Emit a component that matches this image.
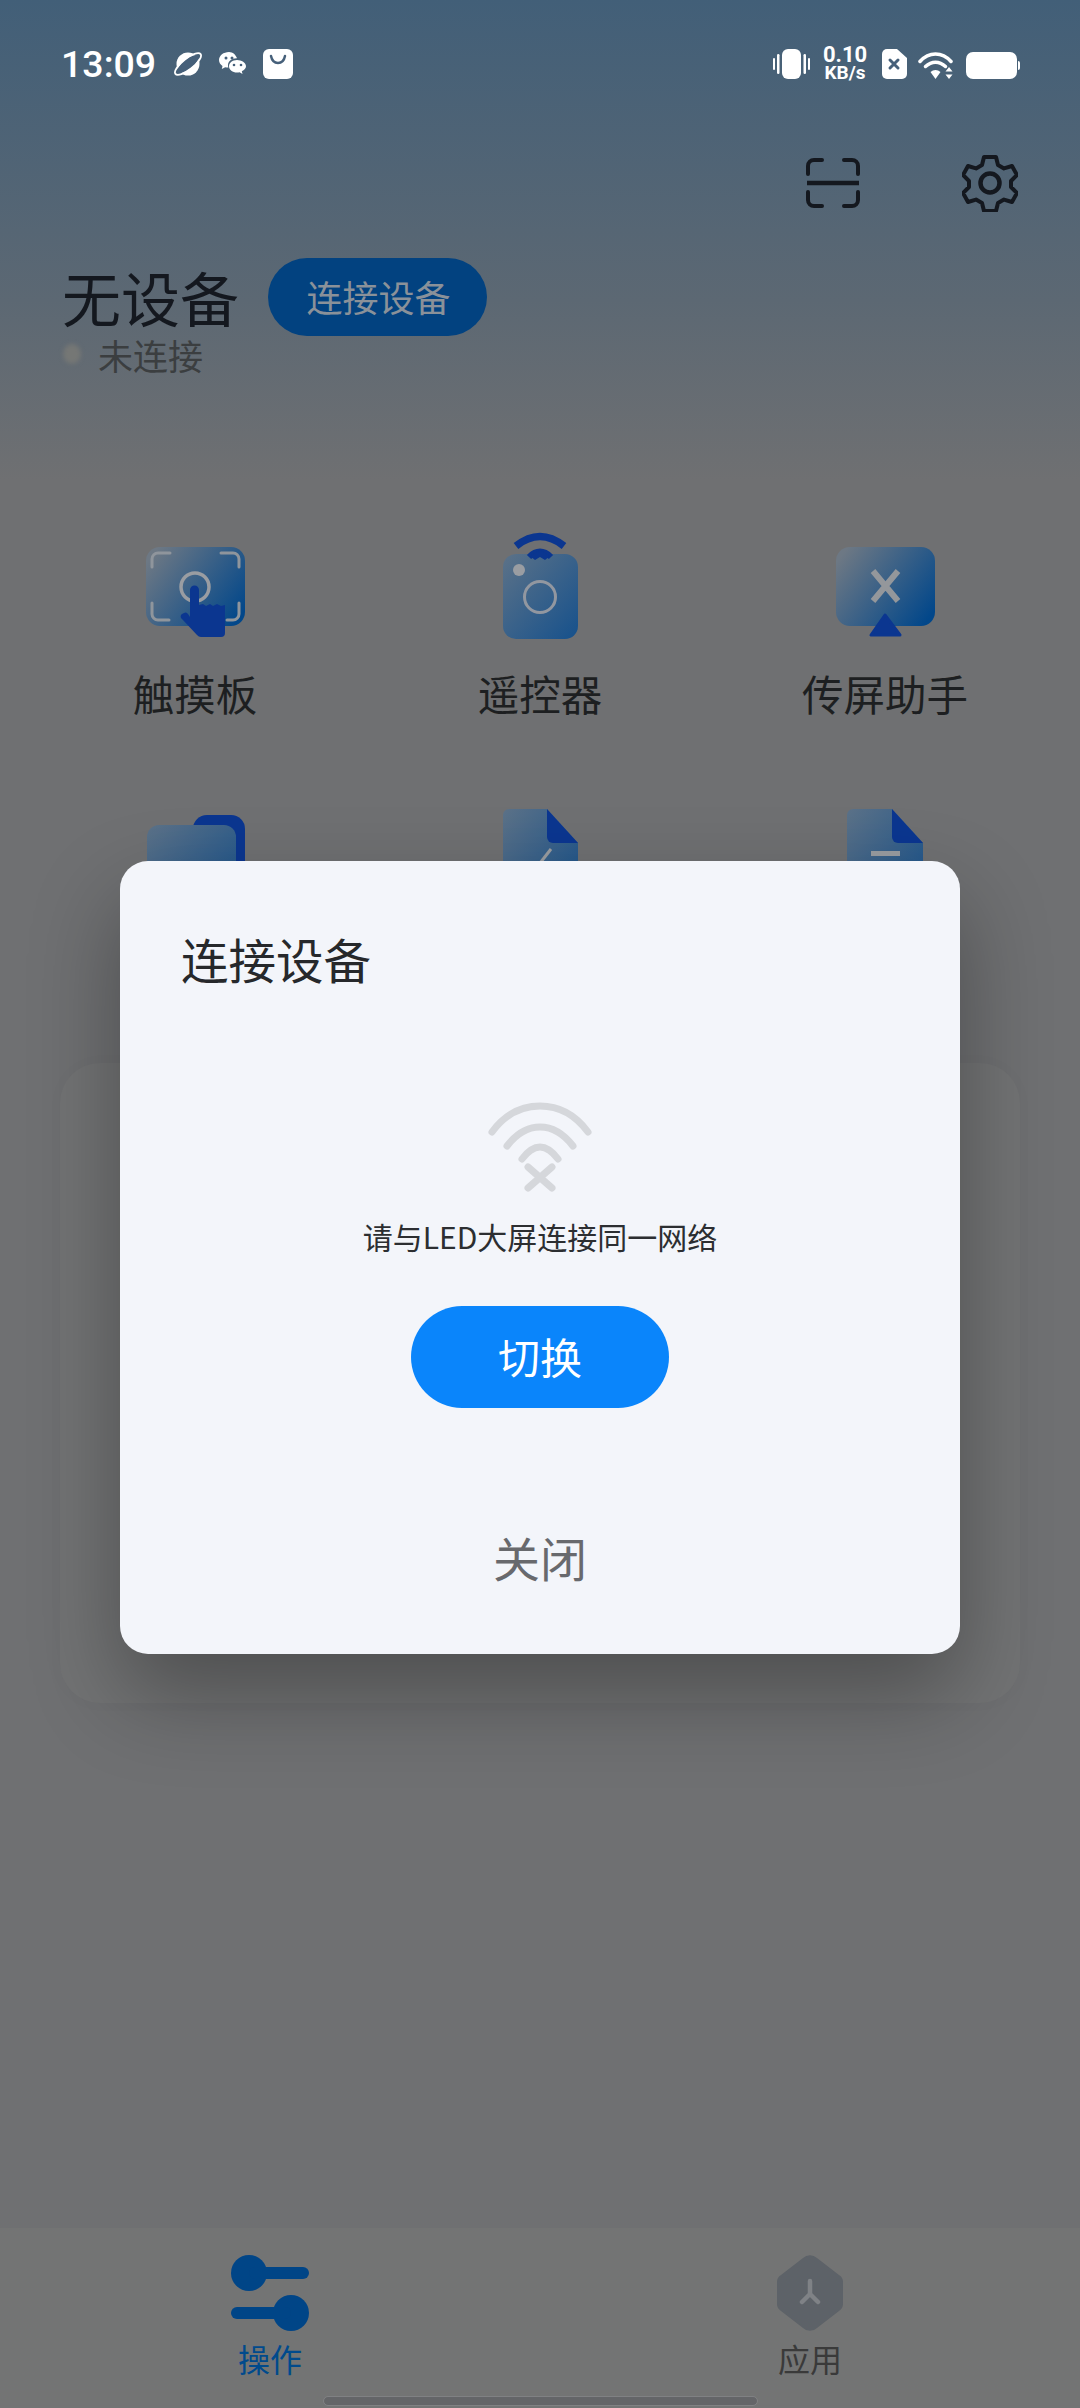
<script>
    const row1 = ["触摸板", "遥控器", "传屏助手"]
</script>

<div class="page">
    <div class="status">
        <span class="time">13:09</span>
        <svg class="s-orbit" width="30" height="26" viewBox="0 0 30 26">
            <circle cx="15" cy="13" r="11.5" fill="#fff"/>
            <ellipse cx="15" cy="13" rx="13" ry="5" transform="rotate(-38 15 13)" fill="#46607a"/>
            <ellipse cx="15" cy="13" rx="16" ry="5.5" transform="rotate(-38 15 13)" fill="none" stroke="#fff" stroke-width="1.8"/>
            <ellipse cx="15" cy="13" rx="10" ry="2.6" transform="rotate(-38 15 13)" fill="#46607a"/>
        </svg>
        <svg class="s-wechat" width="28" height="24" viewBox="0 0 28 24">
            <path d="M10 0C4.500 0 0 3.600 0 8c0 2.500 1.400 4.600 3.500 6L2.800 17l3.400-1.800c1 .3 2.100.4 3.200.4-.3-.8-.4-1.500-.4-2.300 0-4 3.800-7 8.500-7h.5C16.900 2.900 13.800 0 10 0z" fill="#fff"/>
            <path d="M18 8c-4.400 0-8 2.800-8 6.300s3.600 6.300 8 6.300c.9 0 1.800-.1 2.600-.4l2.900 1.700-.7-2.600c2.500-1.100 4.200-3 4.200-5 0-3.500-4.600-6.300-9-6.300z" fill="#fff"/>
            <circle cx="7" cy="6" r="1.500" fill="#46607a"/>
            <circle cx="13" cy="6" r="1.500" fill="#46607a"/>
            <circle cx="15" cy="13" r="1.300" fill="#46607a"/>
            <circle cx="22" cy="13" r="1.300" fill="#46607a"/>
        </svg>
        <svg class="s-bag" width="30" height="30" viewBox="0 0 30 30">
            <rect width="30" height="30" rx="6" fill="#fff"/>
            <path d="M8 7c1 5 3 7 7 7s6-2 7-7" fill="none" stroke="#46607a" stroke-width="2.500" stroke-linecap="round"/>
        </svg>
        <div class="status-right">
            <svg width="37" height="30" viewBox="0 0 37 30">
                <rect x="9" width="19" height="30" rx="6" fill="#fff"/>
                <rect y="9" width="2" height="12" rx="1" fill="#fff"/>
                <rect x="4" y="5" width="2.500" height="20" rx="1.200" fill="#fff"/>
                <rect x="30.500" y="5" width="2.500" height="20" rx="1.200" fill="#fff"/>
                <rect x="35" y="9" width="2" height="12" rx="1" fill="#fff"/>
            </svg>
            <div class="speed"><span>0.10</span><span class="unit">KB/s</span></div>
            <svg width="25" height="30" viewBox="0 0 25 30">
                <path d="M5 0h10l10 9v16a5 5 0 0 1-5 5H5a5 5 0 0 1-5-5V5a5 5 0 0 1 5-5z" fill="#fff"/>
                <path d="M8 11l8 8M16 11l-8 8" stroke="#46607a" stroke-width="3" stroke-linecap="round"/>
            </svg>
            <svg width="37" height="28" viewBox="0 0 37 28">
                <path d="M2 9.500C6 5 12 2 17.500 2S29 5 33 9.500" fill="none" stroke="#fff" stroke-width="3.500" stroke-linecap="round"/>
                <path d="M7.500 14.500c3-2.800 6.500-4.300 10-4.300s7 1.500 10 4.300" fill="none" stroke="#fff" stroke-width="3.500" stroke-linecap="round"/>
                <path d="M12.500 20c1.500-1.300 3.200-2 5-2s3.500.7 5 2L17.500 27z" fill="#fff"/>
                <path d="M31 15l3.500 4.500h-7zM31 27l-3.500-4.500h7z" fill="#fff"/>
            </svg>
            <svg width="54" height="27" viewBox="0 0 54 27">
                <rect width="51" height="27" rx="7" fill="#fff"/>
                <path d="M52 9a2 2 0 0 1 2 2v5a2 2 0 0 1-2 2z" fill="#fff"/>
            </svg>
        </div>
    </div>

    <div class="actions">
        <svg width="54" height="50" viewBox="0 0 54 50" fill="none" stroke="#14181f" stroke-width="4" stroke-linecap="round">
            <path d="M2 16V8a6 6 0 0 1 6-6h8M38 2h8a6 6 0 0 1 6 6v8M2 34v8a6 6 0 0 0 6 6h8M38 48h8a6 6 0 0 0 6-6v-8"/>
            <path d="M1 25h52" stroke-width="4.500" stroke-linecap="butt"/>
        </svg>
        <svg width="56" height="58" viewBox="0 0 56 58" fill="none" stroke="#14181f" stroke-width="4" stroke-linejoin="round">
            <path d="M22 3h12l2 8 6 3.400 8-2.400 5 9-6 6v6l6 6-5 9-8-2.400-6 3.400-2 8H22l-2-8-6-3.400-8 2.400-5-9 6-6v-6l-6-6 5-9 8 2.400 6-3.400z"/>
            <circle cx="28" cy="29" r="9.500" stroke-width="4.500"/>
        </svg>
    </div>

    <div class="device">
        <h1>无设备</h1>
        <button class="connect">连接设备</button>
    </div>
    <div class="state"><i></i>未连接</div>

    <svg width="0" height="0" class="defs">
        <defs>
            <linearGradient id="tile" x1="0" y1="0.2" x2="1" y2="0.8">
                <stop offset="0" stop-color="#6d7884"/>
                <stop offset="1" stop-color="#02478a"/>
            </linearGradient>
            <linearGradient id="tile2" x1="0" y1="0" x2="1" y2="1">
                <stop offset="0" stop-color="#5c7288"/>
                <stop offset="1" stop-color="#16518c"/>
            </linearGradient>
        </defs>
    </svg>

    <div class="grid">
        <div class="cell">
            <svg width="120" height="110" viewBox="0 0 120 110">
                <rect x="11" y="16" width="99" height="79" rx="14" fill="url(#tile)"/>
                <path d="M17 36V28a6 6 0 0 1 6-6h12M86 22h12a6 6 0 0 1 6 6v8M17 72v11a6 6 0 0 0 6 6h11M104 72v11a6 6 0 0 1-6 6h-6" fill="none" stroke="#8f959c" stroke-width="3" stroke-linecap="round"/>
                <circle cx="60" cy="56" r="14" fill="none" stroke="#9a9da2" stroke-width="3.500"/>
                <path d="M55 59a4.500 4.500 0 0 1 9 0V74l4-1 3 2 4-2 3 2 4-2 4 2 4-1v28a4 4 0 0 1-4 4H66a6 6 0 0 1-4-2L47 88a3 3 0 0 1 0-5l2-1a3 3 0 0 1 4 1l2 3z" fill="#0b3690"/>
            </svg>
            <span>{row1[0]}</span>
        </div>
        <div class="cell">
            <svg width="120" height="110" viewBox="0 0 120 110">
                <path d="M36 15Q60-4 84 15" fill="none" stroke="#0b3690" stroke-width="7.500"/>
                <rect x="23" y="23" width="75" height="85" rx="13" fill="url(#tile2)"/>
                <path d="M49 26Q60 15 71 26" fill="none" stroke="#0b3690" stroke-width="6"/>
                <path d="M50 25l5 4 5-3 5 3 5-4-10-6z" fill="#0b3690"/>
                <circle cx="39" cy="39" r="6" fill="#9a9da2"/>
                <circle cx="60" cy="66" r="15.500" fill="none" stroke="#9297a0" stroke-width="3"/>
            </svg>
            <span>{row1[1]}</span>
        </div>
        <div class="cell">
            <svg width="120" height="110" viewBox="0 0 120 110">
                <rect x="11" y="16" width="99" height="79" rx="14" fill="url(#tile)"/>
                <path d="M48 40l25 30M73 40L48 70" stroke="#94979b" stroke-width="6"/>
                <path d="M60 84L46 104h29z" fill="#0b3690" stroke="#0b3690" stroke-width="3" stroke-linejoin="round"/>
            </svg>
            <span>{row1[2]}</span>
        </div>
        <div class="cell short">
            <svg width="120" height="110" viewBox="0 0 120 110">
                <rect x="58" y="10" width="52" height="90" rx="14" fill="#0b3690"/>
                <rect x="12" y="20" width="89" height="80" rx="12" fill="url(#tile2)"/>
            </svg>
        </div>
        <div class="cell short">
            <svg width="120" height="110" viewBox="0 0 120 110">
                <path d="M29 4H67L98 38V100H23V10a6 6 0 0 1 6-6z" fill="url(#tile2)"/>
                <path d="M67 4L98 38H73a6 6 0 0 1-6-6z" fill="#0b3690"/>
                <path d="M71 44L57 62" stroke="#9a9da1" stroke-width="3"/>
            </svg>
        </div>
        <div class="cell short">
            <svg width="120" height="110" viewBox="0 0 120 110">
                <path d="M28 4H67L98 38V100H22V10a6 6 0 0 1 6-6z" fill="url(#tile2)"/>
                <path d="M67 4L98 38H73a6 6 0 0 1-6-6z" fill="#0b3690"/>
                <rect x="46" y="46" width="29" height="5" fill="#9a9da1"/>
            </svg>
        </div>
    </div>

    <div class="back-card"></div>

    <nav class="tabbar">
        <div class="tab active">
            <svg width="78" height="76" viewBox="0 0 78 76" fill="#004587">
                <circle cx="18" cy="18" r="18"/>
                <rect x="18" y="12" width="60" height="12" rx="6"/>
                <circle cx="60" cy="58" r="18"/>
                <rect y="52" width="60" height="12" rx="6"/>
            </svg>
            <span>操作</span>
        </div>
        <div class="tab">
            <svg width="68" height="76" viewBox="0 0 68 76">
                <path d="M27 3a10 10 0 0 1 14 0l22 17a8 8 0 0 1 4 7v22a8 8 0 0 1-4 7L41 73a10 10 0 0 1-14 0L5 56a8 8 0 0 1-4-7V27a8 8 0 0 1 4-7z" fill="#5d6268"/>
                <path d="M34 26v13M34 39l-8 8M34 39l8 8" fill="none" stroke="#7f8286" stroke-width="4.500" stroke-linecap="round"/>
            </svg>
            <span>应用</span>
        </div>
    </nav>
    <div class="home"></div>

    <div class="overlay">
        <div class="modal">
            <h2>连接设备</h2>
            <svg class="nowifi" width="104" height="90" viewBox="0 0 104 90" fill="none" stroke="#d5d7db" stroke-width="7" stroke-linecap="round">
                <path d="M4 30C18 11 35 4 52 4s34 7 48 26"/>
                <path d="M19 44c10-13 22-19 33-19s23 6 33 19"/>
                <path d="M34 57c6-8 12-12 18-12s12 4 18 12"/>
                <path d="M40 65l24 21M64 65L40 86"/>
            </svg>
            <p>请与LED大屏连接同一网络</p>
            <button class="switch">切换</button>
            <button class="close">关闭</button>
        </div>
    </div>
</div>

<style>
    :global(body){
        margin: 0;
    }
    .page{
        position: relative;
        width: 1080px;
        height: 2408px;
        overflow: hidden;
        background: linear-gradient(180deg, #425f78 0%, #5c6873 300px, #6f7072 480px, #6f7072 100%);
        font-family: "Noto Sans CJK SC", "Noto Sans", sans-serif;
        display: flex;
        flex-direction: column;
    }
    .status{
        height: 49px;
        padding: 49px 60px 0 61px;
        display: flex;
        align-items: flex-start;
        color: #fff;
    }
    .time{
        font-family: Roboto, sans-serif;
        font-weight: 500;
        font-size: 37.5px;
        line-height: 30px;
        width: 112px;
    }
    .s-orbit{
        margin-top: 2px;
    }
    .s-wechat{
        margin: 3px 0 0 16px;
    }
    .s-bag{
        margin-left: 16px;
    }
    .status-right{
        margin-left: auto;
        display: flex;
        align-items: flex-start;
    }
    .speed{
        margin: -3px 14px 0 12px;
        width: 46px;
        display: flex;
        flex-direction: column;
        align-items: center;
        font-family: Roboto, sans-serif;
        font-weight: 700;
        font-size: 22px;
        line-height: 18px;
    }
    .speed .unit{
        font-size: 19px;
    }
    .status-right svg:nth-of-type(3){
        margin: 3px 11px 0 11px;
    }
    .status-right svg:nth-of-type(4){
        margin-top: 3px;
    }
    .actions{
        margin-top: 56px;
        padding-right: 62px;
        height: 58px;
        display: flex;
        justify-content: flex-end;
        align-items: flex-start;
        gap: 102px;
    }
    .actions svg:first-child{
        margin-top: 4px;
    }
    .device{
        margin-top: 46px;
        padding-left: 62px;
        height: 78px;
        display: flex;
        align-items: center;
        gap: 29px;
    }
    h1{
        margin: 0;
        font-size: 59px;
        font-weight: 400;
        line-height: 78px;
        color: #14181f;
    }
    .connect{
        width: 219px;
        height: 78px;
        padding: 0 0 3px 2px;
        border: 0;
        border-radius: 39px;
        background: #024280;
        color: #8a9199;
        font-family: inherit;
        font-size: 36px;
    }
    .state{
        margin-top: -4px;
        padding-left: 63px;
        height: 44px;
        display: flex;
        align-items: center;
        gap: 17px;
        font-size: 35px;
        color: #3b3e40;
    }
    .state i{
        width: 18px;
        height: 20px;
        border-radius: 50%;
        background: #757775;
        filter: blur(2px);
    }
    .defs{
        position: absolute;
    }
    .grid{
        margin-top: 155px;
        padding: 0 22.5px;
        display: grid;
        grid-template-columns: repeat(3, 345px);
    }
    .cell{
        display: flex;
        flex-direction: column;
        align-items: center;
    }
    .cell svg{
        display: block;
    }
    .cell span{
        margin-top: 25px;
        height: 54px;
        font-size: 41.5px;
        line-height: 54px;
        color: #1d1f21;
    }
    .cell.short{
        margin-top: 85px;
    }
    .back-card{
        margin: 148px 60px 0;
        height: 640px;
        border-radius: 40px;
        background: #727374;
        box-shadow: 0 0 20px rgba(0, 0, 0, .02);
    }
    .tabbar{
        position: absolute;
        left: 0;
        right: 0;
        bottom: 0;
        height: 180px;
        box-sizing: border-box;
        padding-top: 27px;
        background: #737474;
        display: grid;
        grid-template-columns: 1fr 1fr;
    }
    .tab{
        display: flex;
        flex-direction: column;
        align-items: center;
        font-size: 32px;
        line-height: 44px;
        color: #3a3a3a;
    }
    .tab svg{
        display: block;
        margin-bottom: 5px;
    }
    .tab.active{
        color: #004a8c;
    }
    .home{
        position: absolute;
        left: 324px;
        bottom: 3px;
        width: 433px;
        height: 8px;
        border-radius: 4px;
        background: #646568;
        outline: 1px solid #808183;
    }
    .overlay{
        position: absolute;
        inset: 0;
        padding-top: 861px;
        box-sizing: border-box;
        display: flex;
        justify-content: center;
        align-items: flex-start;
    }
    .modal{
        width: 840px;
        height: 793px;
        box-sizing: border-box;
        padding-top: 61px;
        border-radius: 28px;
        background: #f3f5fa;
        box-shadow: 0 40px 90px rgba(0, 0, 0, .32);
        display: flex;
        flex-direction: column;
        align-items: center;
    }
    h2{
        align-self: flex-start;
        margin: 0 0 0 61px;
        font-size: 47.5px;
        font-weight: 400;
        line-height: 74px;
        color: #26282b;
    }
    .nowifi{
        display: block;
        margin-top: 106px;
    }
    p{
        margin: 22px 0 0 0;
        font-size: 30px;
        line-height: 44px;
        color: #2c2e31;
    }
    .switch{
        margin-top: 48px;
        width: 258px;
        height: 102px;
        padding: 0 0 3px 0;
        border: 0;
        border-radius: 51px;
        background: #0a85fb;
        color: #fff;
        font-family: inherit;
        font-size: 42px;
    }
    .close{
        margin-top: 114px;
        padding: 0;
        border: 0;
        background: none;
        color: #68696d;
        font-family: inherit;
        font-size: 47px;
        line-height: 70px;
    }
</style>
